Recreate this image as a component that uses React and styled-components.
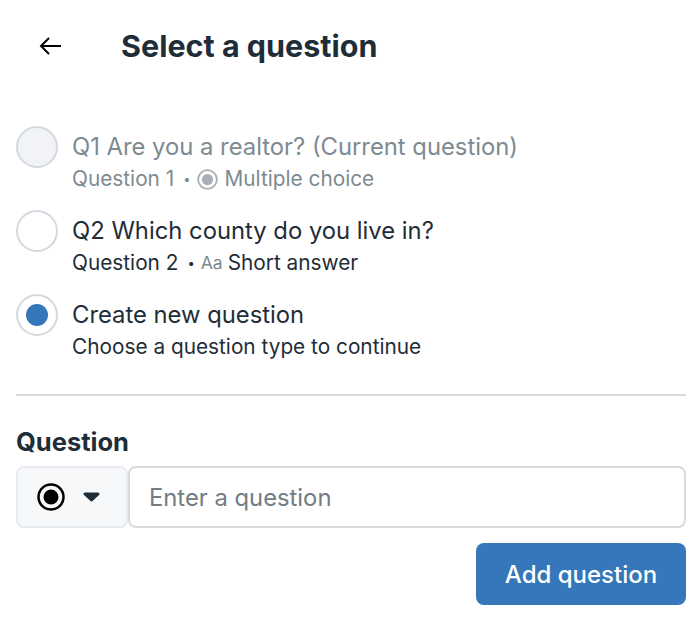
import React from 'react'
import styled, { createGlobalStyle } from 'styled-components'

const GlobalStyle = createGlobalStyle`
  html, body {
    margin: 0;
    padding: 0;
    background: #fff;
    font-family: Inter, "Noto Sans", sans-serif;
    color: #1f2d38;
  }
`

const Page = styled.div`
  width: 700px;
  height: 621px;
  box-sizing: border-box;
  padding: 0 14px 0 16px;
  overflow: hidden;
`

const Header = styled.header`
  display: flex;
  align-items: center;
  height: 92px;
  padding-left: 23px;
`

const BackButton = styled.button`
  display: flex;
  width: 23px;
  height: 18px;
  padding: 0;
  margin-right: 59px;
  border: 0;
  background: none;
`

const Title = styled.h1`
  margin: -2px 0 0;
  font-size: 30.5px;
  font-weight: 700;
  color: #1f2d38;
`

const OptionList = styled.div`
  display: flex;
  flex-direction: column;
  gap: 20px;
  margin-top: 34px;
`

const OptionRow = styled.label`
  display: flex;
  align-items: flex-start;
  height: 64px;
  color: ${p => (p.$muted ? '#7e8a92' : '#1f2d38')};
`

const RadioCircle = styled.span`
  flex: none;
  display: flex;
  align-items: center;
  justify-content: center;
  box-sizing: border-box;
  width: 42px;
  height: 42px;
  margin-right: 14px;
  border: 2px solid #d2d9df;
  border-radius: 50%;
  background: ${p => (p.$muted ? '#f1f3f7' : '#fff')};
`

const RadioDot = styled.span`
  width: 22px;
  height: 22px;
  border-radius: 50%;
  background: #3577ba;
`

const OptionText = styled.div`
  display: flex;
  flex-direction: column;
  padding-top: 5px;
`

const OptionTitle = styled.div`
  font-size: 23.8px;
  line-height: 32px;
`

const OptionMeta = styled.div`
  display: flex;
  align-items: center;
  font-size: 20.8px;
  line-height: 32px;
`

const Bullet = styled.span`
  margin: 0 6px 0 9px;
  font-size: 13px;
`

const TypeGlyph = styled.span`
  margin-right: 5px;
  font-size: 17.5px;
  color: #7e8a92;
`

const MetaIcon = styled.span`
  display: flex;
  margin-right: 7px;
`

const Divider = styled.hr`
  height: 2px;
  margin: 36px 0 0;
  border: 0;
  background: #d6dbdf;
`

const FieldLabel = styled.div`
  margin-top: 30px;
  font-size: 25.5px;
  line-height: 32px;
  font-weight: 700;
  color: #1f2d38;
`

const InputRow = styled.div`
  display: flex;
  margin-top: 8px;
  height: 62px;
`

const TypeSelect = styled.button`
  display: flex;
  align-items: center;
  box-sizing: border-box;
  width: 112px;
  padding: 0 0 0 19px;
  border: 2px solid #e8ebef;
  border-radius: 8px;
  background: #f6f8fa;
  gap: 18px;
`

const QuestionInput = styled.input`
  flex: 1;
  box-sizing: border-box;
  min-width: 0;
  padding: 0 19px;
  border: 2px solid #d6dbe0;
  border-radius: 8px;
  background: #fff;
  font-family: inherit;
  font-size: 23.8px;
  color: #1f2d38;

  &::placeholder {
    color: #727c84;
    opacity: 1;
  }
`

const Actions = styled.div`
  display: flex;
  justify-content: flex-end;
  margin-top: 15px;
`

const AddButton = styled.button`
  width: 210px;
  height: 62px;
  border: 0;
  border-radius: 8px;
  background: #3577ba;
  color: #fff;
  font-family: inherit;
  font-size: 24px;
  font-weight: 500;
`

const BackArrow = () => (
  <svg width="23" height="18" viewBox="0 0 23 18" fill="none" stroke="#000" strokeWidth="2">
    <path d="M22 9H2M10 1L2 9l8 8" />
  </svg>
)

const RadioIcon = ({ size, color, fill }) => (
  <svg width={size} height={size} viewBox="0 0 28 28">
    <circle cx="14" cy="14" r="12.500" fill="none" stroke={color} strokeWidth="2.500" />
    <circle cx="14" cy="14" r="7.500" fill={fill} />
  </svg>
)

const Caret = () => (
  <svg width="17" height="10" viewBox="0 0 17 10">
    <path d="M2 2h13L8.500 8z" fill="#1f2d38" stroke="#1f2d38" strokeWidth="3" strokeLinejoin="round" />
  </svg>
)

const App = () => (
  <Page>
    <GlobalStyle />
    <Header>
      <BackButton><BackArrow /></BackButton>
      <Title>Select a question</Title>
    </Header>

    <OptionList>
      <OptionRow $muted>
        <RadioCircle $muted />
        <OptionText>
          <OptionTitle>Q1 Are you a realtor? (Current question)</OptionTitle>
          <OptionMeta>
            Question 1<Bullet>•</Bullet>
            <MetaIcon><RadioIcon size={21} color="#a9afb5" fill="#a9afb5" /></MetaIcon>
            Multiple choice
          </OptionMeta>
        </OptionText>
      </OptionRow>
      <OptionRow>
        <RadioCircle />
        <OptionText>
          <OptionTitle>Q2 Which county do you live in?</OptionTitle>
          <OptionMeta>
            Question 2<Bullet>•</Bullet>
            <TypeGlyph>Aa</TypeGlyph>
            Short answer
          </OptionMeta>
        </OptionText>
      </OptionRow>
      <OptionRow>
        <RadioCircle><RadioDot /></RadioCircle>
        <OptionText>
          <OptionTitle>Create new question</OptionTitle>
          <OptionMeta>Choose a question type to continue</OptionMeta>
        </OptionText>
      </OptionRow>
    </OptionList>

    <Divider />

    <FieldLabel>Question</FieldLabel>
    <InputRow>
      <TypeSelect>
        <RadioIcon size={28} color="#000" fill="#000" />
        <Caret />
      </TypeSelect>
      <QuestionInput placeholder="Enter a question" />
    </InputRow>

    <Actions>
      <AddButton>Add question</AddButton>
    </Actions>
  </Page>
)

export default App
